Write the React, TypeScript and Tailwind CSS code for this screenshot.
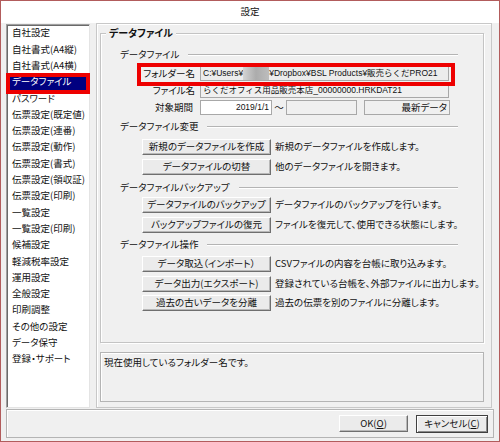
import React from "react";

const items = [
  "自社設定",
  "自社書式(A4縦)",
  "自社書式(A4横)",
  "データファイル",
  "パスワード",
  "伝票設定(既定値)",
  "伝票設定(連番)",
  "伝票設定(動作)",
  "伝票設定(書式)",
  "伝票設定(領収証)",
  "伝票設定(印刷)",
  "一覧設定",
  "一覧設定(印刷)",
  "候補設定",
  "軽減税率設定",
  "運用設定",
  "全般設定",
  "印刷調整",
  "その他の設定",
  "データ保守",
  "登録・サポート",
];

const fieldFont =
  "font-['Liberation_Sans','Noto_Sans_CJK_JP',sans-serif] [font-feature-settings:normal] text-[8.5px]";

function Header({ label, mt }: { label: string; mt: string }) {
  return (
    <div className={`flex items-center h-[14px] pl-[19px] pr-[25px] ${mt}`}>
      <span className="whitespace-nowrap">{label}</span>
      <div className="flex-1 ml-[9px] border-t border-t-[#b4b4b4] border-b border-b-white" />
    </div>
  );
}

function Btn({ label, desc, mt }: { label: string; desc: string; mt: string }) {
  return (
    <div className={`flex items-center ml-[41px] ${mt}`}>
      <div className="w-[129px] h-[16px] flex items-center justify-center bg-[#ebebeb] border border-t-white border-l-white border-b-[#6f6f6f] border-r-[#6f6f6f] shadow-[inset_-1px_-1px_0_#b8b8b8] whitespace-nowrap">
        {label}
      </div>
      <span className="ml-[4px] whitespace-nowrap">{desc}</span>
    </div>
  );
}

export default function App() {
  return (
    <div className="w-[500px] h-[442px] border border-[#b25c5c] bg-[#f0f0f0] flex flex-col overflow-hidden text-[#111] text-[9.5px] leading-none font-['Noto_Sans_CJK_JP','Noto_Sans',sans-serif] [font-feature-settings:'palt']">
      {/* title */}
      <div className="h-[22px] bg-white flex items-center justify-center">設定</div>

      {/* main */}
      <div className="flex h-[385px] pl-[5px]">
        {/* list */}
        <div className="relative mt-[1px] w-[84px] h-[384px] bg-white border border-t-[#a0a0a0] border-l-[#a0a0a0] border-b-[#e4e4e4] border-r-[#e4e4e4] shadow-[inset_1px_1px_0_#6a6a6a]">
          <div className="flex flex-col">
            {items.map((it, i) => (
              <div
                key={it}
                className={`h-[16.3px] flex items-center pl-[5px] whitespace-nowrap ${
                  i === 3 ? "bg-[#000080] text-white" : ""
                }`}
              >
                {it}
              </div>
            ))}
          </div>
          <div className="absolute left-[-1px] top-[48px] w-[84px] h-[21px] border-[4px] border-[#ee0000]" />
        </div>

        {/* right panel */}
        <div className="ml-[6px] w-[396px] h-[385px] border border-[#c8c8c8] shadow-[inset_1px_1px_0_#fff]">
          {/* group box */}
          <div className="relative ml-[3px] mt-[9px] w-[384px] h-[310px] border border-[#c4c4c4] shadow-[inset_1px_1px_0_#fff,1px_1px_0_#fff]">
            <div className="absolute left-[5px] top-[-6px] px-[3px] bg-[#f0f0f0] font-bold text-[10px]">データファイル</div>

            <Header label="データファイル" mt="mt-[14px]" />

            {/* row 1 */}
            <div className="relative flex items-center h-[15px] mt-[4px]">
              <div className="w-[94px] text-right">フォルダー名</div>
              <div className={`ml-[5px] w-[249px] h-[15px] bg-[#ececec] border border-[#a8a8a8] flex items-center pl-[2px] whitespace-nowrap ${fieldFont}`}>
                <span>C:¥Users¥</span>
                <span className="inline-block w-[26px] h-[13px] bg-linear-to-r from-[#d4d4d4] via-[#acacac] to-[#bdbdbd]" />
                <span>¥Dropbox¥BSL Products¥販売らくだPRO21</span>
              </div>
              <div className="absolute left-[36px] top-[-3px] w-[318px] h-[23px] border-[4px] border-[#ee0000]" />
            </div>

            {/* row 2 */}
            <div className="flex items-center h-[15px] mt-[2px]">
              <div className="w-[94px] text-right">ファイル名</div>
              <div className={`ml-[5px] w-[249px] h-[15px] bg-[#f0f0f0] border border-[#a8a8a8] flex items-center pl-[2px] whitespace-nowrap ${fieldFont}`}>
                らくだオフィス用品販売本店_00000000.HRKDAT21
              </div>
            </div>

            {/* row 3 */}
            <div className="flex items-center h-[15px] mt-[2px]">
              <div className="w-[92px] text-right">対象期間</div>
              <div className={`ml-[7px] w-[72px] h-[15px] bg-white border border-[#a8a8a8] flex items-center justify-end pr-[2px] ${fieldFont}`}>
                2019/1/1
              </div>
              <div className="w-[14px] text-center">～</div>
              <div className="w-[71px] h-[15px] bg-[#f0f0f0] border border-[#a8a8a8]" />
              <div className="ml-[7px] w-[86px] h-[15px] bg-[#f0f0f0] border border-[#a8a8a8] flex items-center justify-end pr-[2px]">
                最新データ
              </div>
            </div>

            <Header label="データファイル変更" mt="mt-[5px]" />
            <Btn label="新規のデータファイルを作成" desc="新規のデータファイルを作成します。" mt="mt-[5px]" />
            <Btn label="データファイルの切替" desc="他のデータファイルを開きます。" mt="mt-[4px]" />

            <Header label="データファイルバックアップ" mt="mt-[6px]" />
            <Btn label="データファイルのバックアップ" desc="データファイルのバックアップを行います。" mt="mt-[2px]" />
            <Btn label="バックアップファイルの復元" desc="ファイルを復元して、使用できる状態にします。" mt="mt-[4px]" />

            <Header label="データファイル操作" mt="mt-[5px]" />
            <Btn label="データ取込（インポート）" desc="CSVファイルの内容を台帳に取り込みます。" mt="mt-[4px]" />
            <Btn label="データ出力(エクスポート)" desc="登録されている台帳を、外部ファイルに出力します。" mt="mt-[4px]" />
            <Btn label="過去の古いデータを分離" desc="過去の伝票を別のファイルに分離します。" mt="mt-[3px]" />
          </div>

          {/* description box */}
          <div className="ml-[3px] mt-[9px] w-[384px] h-[50px] border border-[#b4b4b4] shadow-[inset_1px_1px_0_#fff] pl-[3px] pt-[5px]">
            現在使用しているフォルダー名です。
          </div>
        </div>
      </div>

      {/* bottom strip */}
      <div className="ml-[5px] mt-[1px] w-[488px] h-[29px] border border-[#b4b4b4] shadow-[inset_1px_1px_0_#fff] flex items-center justify-end pr-[5px] gap-[8px]">
        <div className="w-[69px] h-[17px] flex items-center justify-center bg-[#ebebeb] border border-t-white border-l-white border-b-[#6f6f6f] border-r-[#6f6f6f] shadow-[inset_-1px_-1px_0_#b8b8b8]">
          OK(<span className="underline">O</span>)
        </div>
        <div className="w-[72px] h-[18px] flex items-center justify-center bg-[#ebebeb] border border-[#404040] shadow-[inset_1px_1px_0_#fff,inset_-1px_-1px_0_#8a8a8a]">
          キャンセル(<span className="underline">C</span>)
        </div>
      </div>
    </div>
  );
}
